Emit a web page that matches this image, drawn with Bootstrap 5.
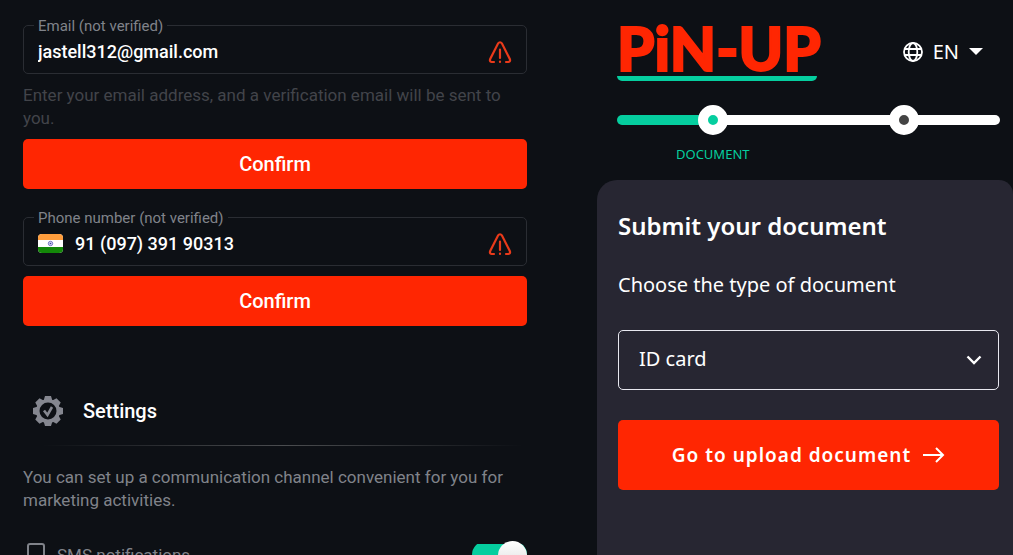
<!DOCTYPE html>
<html lang="en">
<head>
<meta charset="utf-8">
<meta name="viewport" content="width=device-width, initial-scale=1">
<title>Profile verification</title>
<link href="https://cdn.jsdelivr.net/npm/bootstrap@5.3.0/dist/css/bootstrap.min.css" rel="stylesheet">
<style>
  :root { --ink: #0d1015; --panel: #272632; --red: #ff2602; --mint: #05ce9f; --grey: #80838a; }
  body { background: var(--ink); color: #fff; font-family: Roboto, sans-serif; font-size: 17px; line-height: 23px; }
  .page-grid { display: grid; grid-template-columns: minmax(0, 1fr) 416px; }
  .profile { padding: 25px 70px 0 23px; }
  .field { height: 49px; border: 1px solid #2a2d33; border-radius: 5px; padding: 4px 14px 0; }
  .field label { top: -12px; left: 10px; padding: 0 4px; background: var(--ink); color: var(--grey); font-size: 15px; line-height: 24px; }
  .field input { background: none; border: 0; outline: 0; color: #fff; font-size: 18px; font-weight: 500; padding: 0; min-width: 0; }
  .hint { color: #42444a; margin: 10px 0 9px; }
  .btn-red, .btn-red:hover { background: var(--red); color: #fff; border: 0; border-radius: 5px; }
  .btn-confirm { height: 50px; font-size: 20px; font-weight: 500; }
  .phone-field { margin-top: 28px; margin-bottom: 10px; }
  .settings-head { margin-top: 70px; padding-left: 10px; gap: 20px; }
  .settings-head h2 { font-size: 20px; font-weight: 500; }
  .fade-line { height: 1px; margin: 19px 4px 20px 20px; background: linear-gradient(90deg, transparent, #4b4d50 50%, transparent); }
  .muted-text { color: var(--grey); }
  .sms-row { margin-top: 29px; height: 28px; padding-left: 4px; }
  .toggle { appearance: none; width: 55px; height: 28px; margin: 0; background: linear-gradient(var(--mint), var(--mint)) center / 100% 22px no-repeat; border-radius: 14px; }
  .toggle::before { content: ""; display: block; width: 29px; height: 29px; margin-left: 26px; border-radius: 50%; background: linear-gradient(#fff, #dcdcdc); }
  .verify { font-family: "Noto Sans", sans-serif; }
  .verify-head { padding: 22px 13px 0 20px; }
  .brand { width: 200px; height: 59px; border-bottom: 5px solid var(--mint); border-radius: 0 0 5px 5px; color: var(--red); font: 900 60px/52px Lato, sans-serif; -webkit-text-stroke: 2px var(--red); white-space: nowrap; }
  .lang { font-size: 20px; margin-right: 17px; gap: 10px; }
  .steps { height: 30px; margin-top: 24px; }
  .steps .rail { height: 10px; background: linear-gradient(90deg, var(--mint) 25%, #fff 25%); border-radius: 5px; }
  .steps .dot { width: 30px; height: 30px; border: 10px solid #fff; border-radius: 50%; background: #444; }
  .steps .dot.now { background: var(--mint); }
  .step-names { margin-top: 9px; color: var(--mint); font-size: 13px; line-height: 20px; }
  .doc-panel { margin-top: 16px; padding: 29px 14px 0 21px; background: var(--panel); border-radius: 20px 14px 0 0; min-height: 375px; }
  .doc-panel h1 { font-size: 24px; line-height: 34px; font-weight: 600; margin-bottom: 27px; }
  .doc-panel label { font-size: 20px; line-height: 30px; margin-bottom: 30px; }
  .doc-pick { height: 60px; padding: 0 20px 2px; border: 1px solid #e8e8f0; border-radius: 5px; background-color: transparent; color: #fff; font-size: 20px; background-image: url("data:image/svg+xml,%3Csvg xmlns='http://www.w3.org/2000/svg' viewBox='0 0 16 16'%3E%3Cpath fill='none' stroke='white' stroke-width='2.4' d='m1.5 4.5 6.5 6.5 6.5-6.5'/%3E%3C/svg%3E"); background-size: 16px; background-position: right 16px center; }
  .btn-upload { height: 70px; margin-top: 30px; font-size: 19px; font-weight: 600; letter-spacing: 1px; gap: 12px; }
</style>
</head>
<body>
<svg class="d-none">
  <symbol id="alert" viewBox="0 0 24 24"><path d="M6 22H3.600Q1.200 21.500 2.200 19L9.900 3.700Q12 .8 14.100 3.700L21.800 19Q22.800 21.500 20.400 22H18M12 9.500v8.500M12 21.500v.5" fill="none" stroke="#e93a1a" stroke-width="2.200" stroke-linecap="round"/></symbol>
</svg>
<main class="page-grid vh-100 overflow-hidden">
  <section class="profile">
    <div class="field position-relative d-flex align-items-center">
      <label for="email" class="position-absolute">Email (not verified)</label>
      <input id="email" type="email" class="flex-grow-1" value="jastell312@gmail.com">
      <svg width="24" height="24"><use href="#alert"/></svg>
    </div>
    <p class="hint">Enter your email address, and a verification email will be sent to you.</p>
    <button type="button" class="btn btn-red btn-confirm w-100">Confirm</button>

    <div class="field phone-field position-relative d-flex align-items-center">
      <label for="phone" class="position-absolute">Phone number (not verified)</label>
      <svg class="rounded-1 me-2" width="25" height="19" viewBox="0 0 25 19"><path fill="#fff" d="M0 0h25v19H0z"/><path fill="#ff9d3c" d="M0 0h25v6H0z"/><path fill="#138808" d="M0 13h25v6H0z"/><circle cx="12.5" cy="9.5" r="2.2" fill="#d9d9f2" stroke="#5b5bb8" stroke-width=".8"/><circle cx="12.5" cy="9.5" r=".8" fill="#3a3aa0"/></svg>
      <input id="phone" type="tel" class="flex-grow-1 ms-1" value="91 (097) 391 90313">
      <svg width="24" height="24"><use href="#alert"/></svg>
    </div>
    <button type="button" class="btn btn-red btn-confirm w-100">Confirm</button>

    <div class="settings-head d-flex align-items-center">
      <svg width="30" height="30" viewBox="0 0 30 30"><g fill="#858790"><path id="tooth" d="M12 0h6l1.500 5h-9zM12 30h6l1.500-5h-9z"/><use href="#tooth" transform="rotate(45 15 15)"/><use href="#tooth" transform="rotate(90 15 15)"/><use href="#tooth" transform="rotate(135 15 15)"/><circle cx="15" cy="15" r="12"/></g><circle cx="15" cy="15" r="8.500" fill="#0d1015"/><path d="m11 14.500 3.500 4.500L19 11" fill="none" stroke="#858790" stroke-width="2.600"/></svg>
      <h2 class="mb-0">Settings</h2>
    </div>
    <div class="fade-line"></div>
    <p class="muted-text mb-0">You can set up a communication channel convenient for you for marketing activities.</p>
    <div class="sms-row d-flex align-items-center">
      <svg width="18" height="24" viewBox="0 0 18 24"><path d="M3 1h12q2 0 2 2v18q0 2-2 2H3q-2 0-2-2V3q0-2 2-2z" fill="none" stroke="#80838a" stroke-width="2"/></svg>
      <label for="sms" class="muted-text ms-2 ps-1 flex-grow-1">SMS notifications</label>
      <input id="sms" class="toggle" type="checkbox" role="switch" checked>
    </div>
  </section>

  <section class="verify">
    <header class="verify-head">
      <div class="d-flex justify-content-between align-items-center">
        <div class="brand">PiN-UP</div>
        <button type="button" class="lang btn text-white border-0 p-0 d-flex align-items-center">
          <svg width="20" height="20" viewBox="0 0 20 20" fill="none" stroke="#fff" stroke-width="1.800"><circle cx="10" cy="10" r="9"/><ellipse cx="10" cy="10" rx="4.300" ry="9"/><path d="M1.500 7h17M1.500 13h17"/></svg>
          <span>EN</span>
          <svg width="14" height="7" viewBox="0 0 14 7"><path d="M0 0h14L7 7z" fill="#fff"/></svg>
        </button>
      </div>
      <div class="steps position-relative d-flex align-items-center">
        <div class="rail w-100"></div>
        <span class="dot now position-absolute translate-middle-x" style="left:25%"></span>
        <span class="dot position-absolute translate-middle-x" style="left:75%"></span>
      </div>
      <div class="step-names d-flex"><span class="w-50 text-center">DOCUMENT</span></div>
    </header>
    <form class="doc-panel">
      <h1>Submit your document</h1>
      <label for="doc" class="d-block">Choose the type of document</label>
      <select id="doc" class="form-select doc-pick"><option>ID card</option></select>
      <button type="button" class="btn btn-red btn-upload w-100 d-flex align-items-center justify-content-center">Go to upload document
        <svg width="22" height="16" viewBox="0 0 22 16" fill="none" stroke="#fff" stroke-width="2"><path d="M0 8h20M13 1l7 7-7 7"/></svg>
      </button>
    </form>
  </section>
</main>
<script src="https://cdn.jsdelivr.net/npm/bootstrap@5.3.0/dist/js/bootstrap.bundle.min.js"></script>
</body>
</html>
